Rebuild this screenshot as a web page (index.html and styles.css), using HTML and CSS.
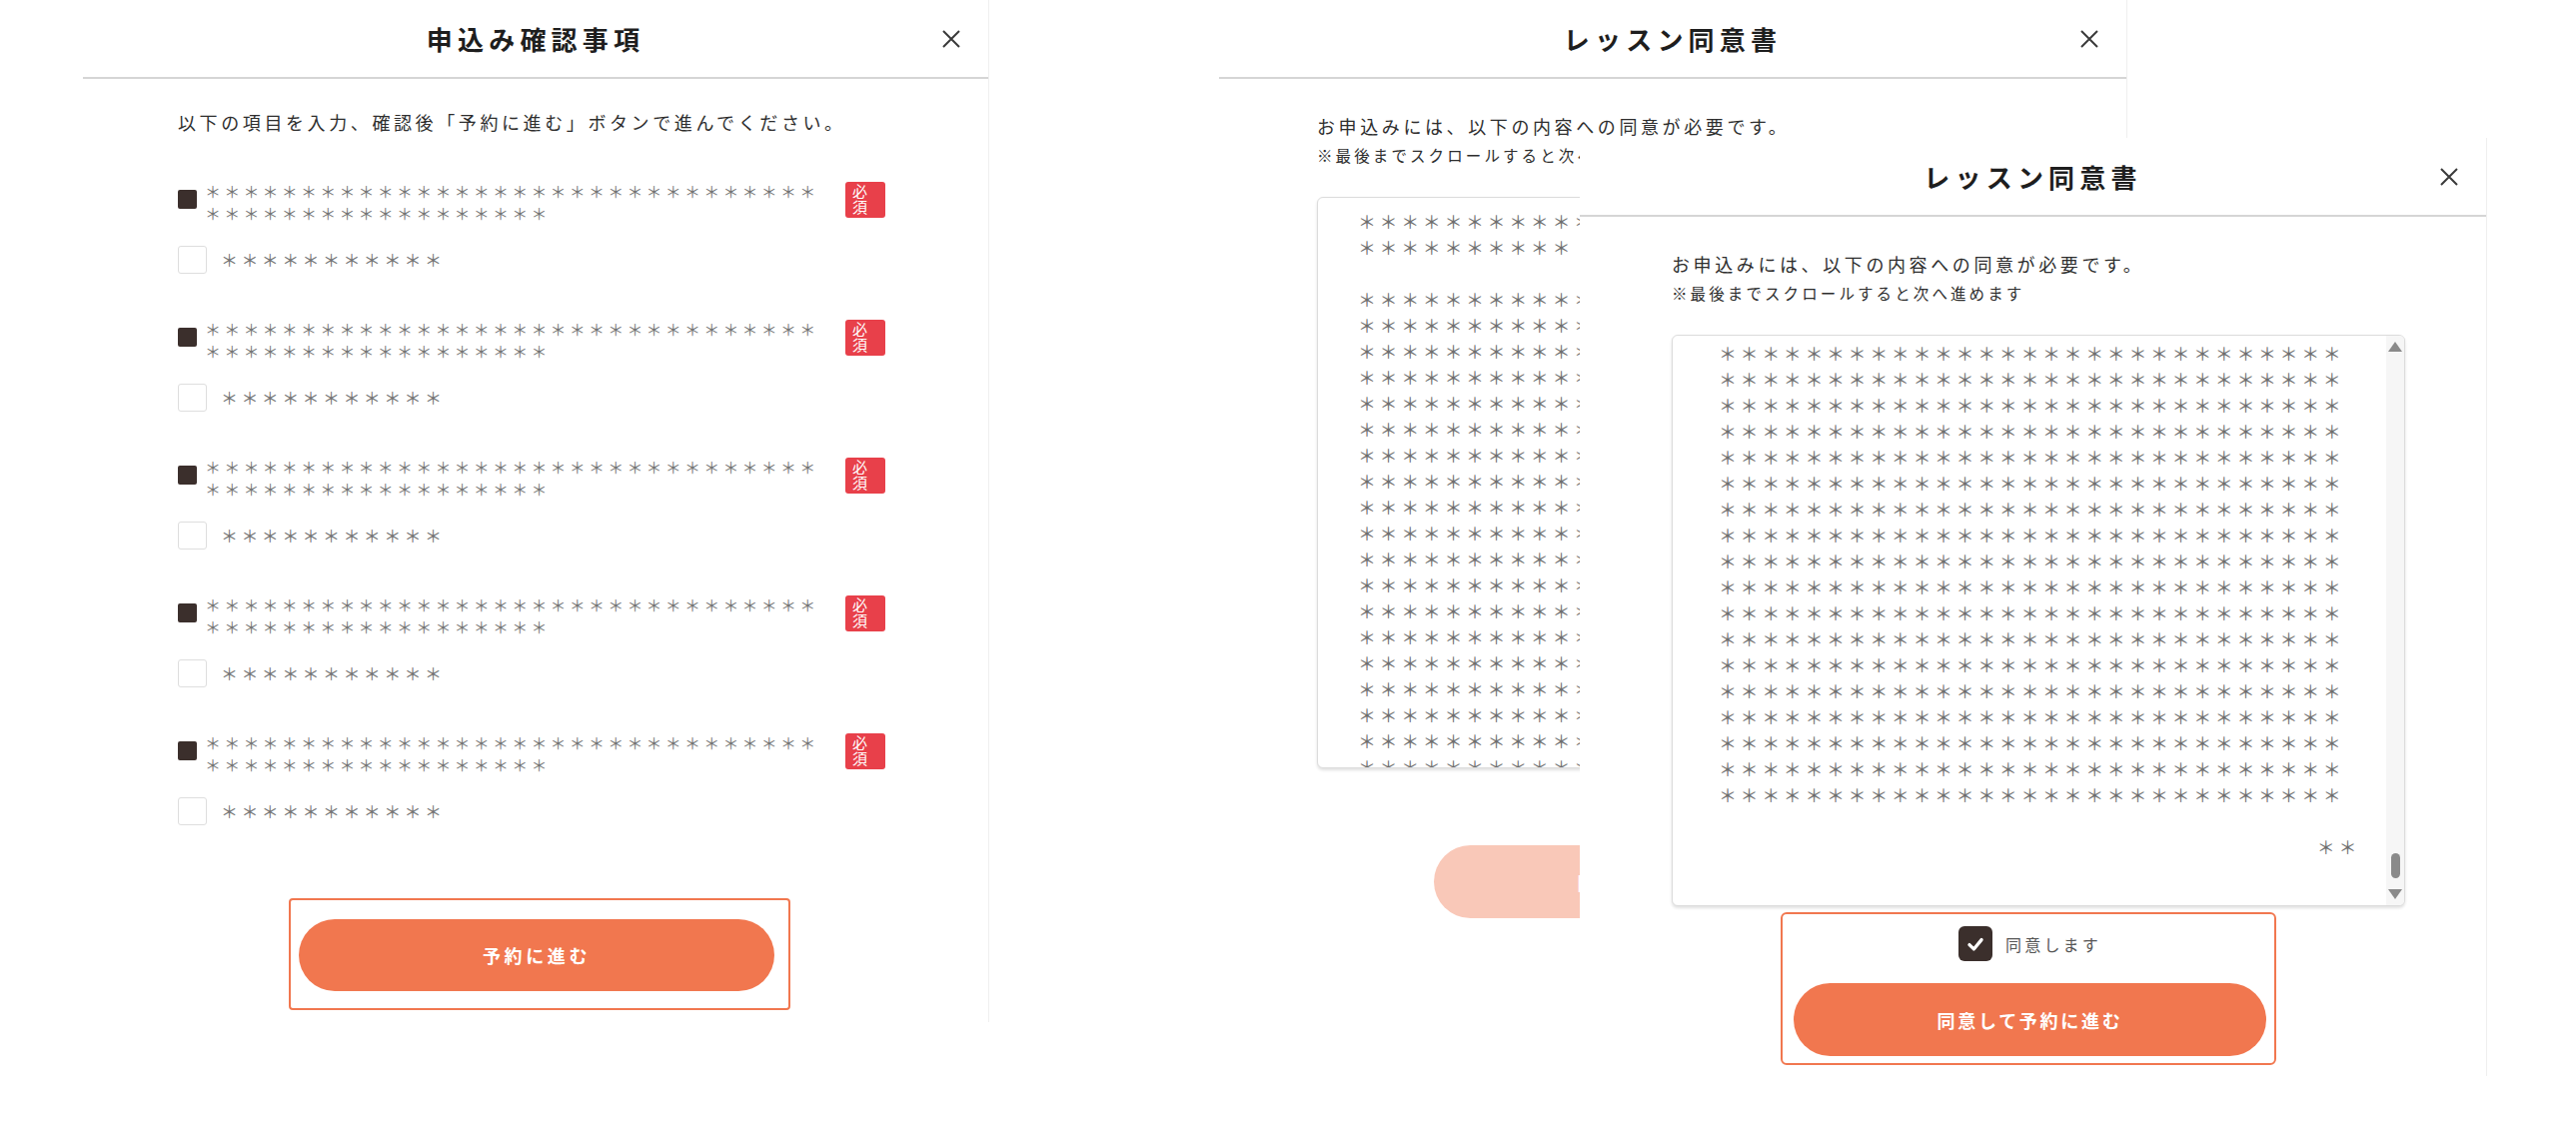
FILE: index.html
```html
<!DOCTYPE html>
<html lang="ja">
<head>
<meta charset="utf-8">
<title>申込み確認事項 / レッスン同意書</title>
<link rel="stylesheet" href="styles.css">
</head>
<body>
<div class="canvas">

  <section class="panel panel--confirm">
    <header class="panel-head">
      <h2 class="panel-title">申込み確認事項</h2>
      <button class="close-btn" aria-label="閉じる"><svg viewBox="0 0 20 20" width="20" height="20"><path d="M2 2L18 18M18 2L2 18" stroke="#3a3a3a" stroke-width="2" fill="none"/></svg></button>
    </header>
    <div class="panel-body panel-body--confirm">
      <p class="lead">以下の項目を入力、確認後「予約に進む」ボタンで進んでください。</p>
      <ul class="items">
        <li class="item">
          <div class="item-main"><span class="bullet"></span><span class="item-text">＊＊＊＊＊＊＊＊＊＊＊＊＊＊＊＊＊＊＊＊＊＊＊＊＊＊＊＊＊＊＊＊＊＊＊＊＊＊＊＊＊＊＊＊＊＊＊＊＊＊</span><span class="badge">必<br>須</span></div>
          <label class="item-check"><span class="box"></span><span class="item-label">＊＊＊＊＊＊＊＊＊＊＊</span></label>
        </li>
        <li class="item">
          <div class="item-main"><span class="bullet"></span><span class="item-text">＊＊＊＊＊＊＊＊＊＊＊＊＊＊＊＊＊＊＊＊＊＊＊＊＊＊＊＊＊＊＊＊＊＊＊＊＊＊＊＊＊＊＊＊＊＊＊＊＊＊</span><span class="badge">必<br>須</span></div>
          <label class="item-check"><span class="box"></span><span class="item-label">＊＊＊＊＊＊＊＊＊＊＊</span></label>
        </li>
        <li class="item">
          <div class="item-main"><span class="bullet"></span><span class="item-text">＊＊＊＊＊＊＊＊＊＊＊＊＊＊＊＊＊＊＊＊＊＊＊＊＊＊＊＊＊＊＊＊＊＊＊＊＊＊＊＊＊＊＊＊＊＊＊＊＊＊</span><span class="badge">必<br>須</span></div>
          <label class="item-check"><span class="box"></span><span class="item-label">＊＊＊＊＊＊＊＊＊＊＊</span></label>
        </li>
        <li class="item">
          <div class="item-main"><span class="bullet"></span><span class="item-text">＊＊＊＊＊＊＊＊＊＊＊＊＊＊＊＊＊＊＊＊＊＊＊＊＊＊＊＊＊＊＊＊＊＊＊＊＊＊＊＊＊＊＊＊＊＊＊＊＊＊</span><span class="badge">必<br>須</span></div>
          <label class="item-check"><span class="box"></span><span class="item-label">＊＊＊＊＊＊＊＊＊＊＊</span></label>
        </li>
        <li class="item">
          <div class="item-main"><span class="bullet"></span><span class="item-text">＊＊＊＊＊＊＊＊＊＊＊＊＊＊＊＊＊＊＊＊＊＊＊＊＊＊＊＊＊＊＊＊＊＊＊＊＊＊＊＊＊＊＊＊＊＊＊＊＊＊</span><span class="badge">必<br>須</span></div>
          <label class="item-check"><span class="box"></span><span class="item-label">＊＊＊＊＊＊＊＊＊＊＊</span></label>
        </li>
      </ul>
      <div class="cta cta--confirm">
        <button class="pill">予約に進む</button>
      </div>
    </div>
  </section>

  <section class="panel panel--back">
    <header class="panel-head">
      <h2 class="panel-title">レッスン同意書</h2>
      <button class="close-btn" aria-label="閉じる"><svg viewBox="0 0 20 20" width="20" height="20"><path d="M2 2L18 18M18 2L2 18" stroke="#3a3a3a" stroke-width="2" fill="none"/></svg></button>
    </header>
    <div class="panel-body panel-body--consent">
      <p class="lead">お申込みには、以下の内容への同意が必要です。</p>
      <p class="note">※最後までスクロールすると次へ進めます</p>
      <div class="terms">
        <div class="terms-content">
          <p class="terms-text">＊＊＊＊＊＊＊＊＊＊＊＊＊＊＊＊＊＊＊＊＊＊＊＊＊＊＊＊＊＊＊＊＊＊＊＊＊＊＊</p>
          <p class="terms-text terms-text--gap">＊＊＊＊＊＊＊＊＊＊＊＊＊＊＊＊＊＊＊＊＊＊＊＊＊＊＊＊＊＊＊＊＊＊＊＊＊＊＊＊＊＊＊＊＊＊＊＊＊＊＊＊＊＊＊＊＊＊＊＊＊＊＊＊＊＊＊＊＊＊＊＊＊＊＊＊＊＊＊＊＊＊＊＊＊＊＊＊＊＊＊＊＊＊＊＊＊＊＊＊＊＊＊＊＊＊＊＊＊＊＊＊＊＊＊＊＊＊＊＊＊＊＊＊＊＊＊＊＊＊＊＊＊＊＊＊＊＊＊＊＊＊＊＊＊＊＊＊＊＊＊＊＊＊＊＊＊＊＊＊＊＊＊＊＊＊＊＊＊＊＊＊＊＊＊＊＊＊＊＊＊＊＊＊＊＊＊＊＊＊＊＊＊＊＊＊＊＊＊＊＊＊＊＊＊＊＊＊＊＊＊＊＊＊＊＊＊＊＊＊＊＊＊＊＊＊＊＊＊＊＊＊＊＊＊＊＊＊＊＊＊＊＊＊＊＊＊＊＊＊＊＊＊＊＊＊＊＊＊＊＊＊＊＊＊＊＊＊＊＊＊＊＊＊＊＊＊＊＊＊＊＊＊＊＊＊＊＊＊＊＊＊＊＊＊＊＊＊＊＊＊＊＊＊＊＊＊＊＊＊＊＊＊＊＊＊＊＊＊＊＊＊＊＊＊＊＊＊＊＊＊＊＊＊＊＊＊＊＊＊＊＊＊＊＊＊＊＊＊＊＊＊＊＊＊＊＊＊＊＊＊＊＊＊＊＊＊＊＊＊＊＊＊＊＊＊＊＊＊＊＊＊＊＊＊＊＊＊＊＊＊＊＊＊＊＊＊＊＊＊＊＊＊＊＊＊＊＊＊＊＊＊＊＊＊＊＊＊＊＊＊＊＊＊＊＊＊＊＊＊＊＊＊＊＊＊＊＊＊＊＊＊＊＊＊＊＊＊＊＊＊＊＊＊＊＊＊＊＊＊＊＊＊＊＊＊＊＊＊＊＊＊＊＊＊＊＊＊＊＊＊＊＊＊＊＊＊＊＊＊＊＊＊＊＊＊＊＊＊＊＊＊＊＊＊＊＊＊＊＊＊＊＊＊＊＊＊＊＊＊＊＊＊＊＊＊＊＊＊＊＊＊＊＊＊＊＊＊＊＊＊＊＊＊＊＊＊＊＊＊＊＊＊＊＊＊＊＊＊＊＊＊＊＊＊＊＊＊＊＊＊＊＊＊＊＊＊＊＊＊＊＊＊＊＊＊＊＊＊＊＊＊＊＊＊＊＊＊＊＊＊＊＊＊＊＊＊＊＊＊＊＊＊＊＊＊＊＊＊＊＊＊＊＊＊＊＊＊＊＊＊＊＊＊＊＊＊＊＊＊＊＊＊＊＊＊＊＊＊＊＊＊＊＊＊＊＊＊＊＊＊＊＊＊＊＊＊＊＊＊＊＊＊＊＊＊＊＊＊＊＊</p>
        </div>
        <div class="scrollbar"><span class="sb-up"></span><span class="sb-track"><span class="sb-thumb sb-thumb--top"></span></span><span class="sb-down"></span></div>
      </div>
      <div class="agree agree--plain">
        <label class="agree-check"><span class="agree-box agree-box--off"></span><span class="agree-label">同意します</span></label>
        <button class="pill pill--agree pill--disabled">同意して予約に進む</button>
      </div>
    </div>
  </section>

  <section class="panel panel--front">
    <header class="panel-head">
      <h2 class="panel-title">レッスン同意書</h2>
      <button class="close-btn" aria-label="閉じる"><svg viewBox="0 0 20 20" width="20" height="20"><path d="M2 2L18 18M18 2L2 18" stroke="#3a3a3a" stroke-width="2" fill="none"/></svg></button>
    </header>
    <div class="panel-body panel-body--consent panel-body--front">
      <p class="lead">お申込みには、以下の内容への同意が必要です。</p>
      <p class="note">※最後までスクロールすると次へ進めます</p>
      <div class="terms">
        <div class="terms-content terms-content--end">
          <p class="terms-text terms-text--tail">＊＊＊＊＊＊＊＊＊＊＊＊＊＊＊＊＊＊＊＊＊＊＊＊＊＊＊＊＊＊＊＊＊＊＊＊＊＊＊＊＊＊＊＊＊＊＊＊＊＊＊＊＊＊＊＊＊＊＊＊＊＊＊＊＊＊＊＊＊＊＊＊＊＊＊＊＊＊＊＊＊＊＊＊＊＊＊＊＊＊＊＊＊＊＊＊＊＊＊＊＊＊＊＊＊＊＊＊＊＊＊＊＊＊＊＊＊＊＊＊＊＊＊＊＊＊＊＊＊＊＊＊＊＊＊＊＊＊＊＊＊＊＊＊＊＊＊＊＊＊＊＊＊＊＊＊＊＊＊＊＊＊＊＊＊＊＊＊＊＊＊＊＊＊＊＊＊＊＊＊＊＊＊＊＊＊＊＊＊＊＊＊＊＊＊＊＊＊＊＊＊＊＊＊＊＊＊＊＊＊＊＊＊＊＊＊＊＊＊＊＊＊＊＊＊＊＊＊＊＊＊＊＊＊＊＊＊＊＊＊＊＊＊＊＊＊＊＊＊＊＊＊＊＊＊＊＊＊＊＊＊＊＊＊＊＊＊＊＊＊＊＊＊＊＊＊＊＊＊＊＊＊＊＊＊＊＊＊＊＊＊＊＊＊＊＊＊＊＊＊＊＊＊＊＊＊＊＊＊＊＊＊＊＊＊＊＊＊＊＊＊＊＊＊＊＊＊＊＊＊＊＊＊＊＊＊＊＊＊＊＊＊＊＊＊＊＊＊＊＊＊＊＊＊＊＊＊＊＊＊＊＊＊＊＊＊＊＊＊＊＊＊＊＊＊＊＊＊＊＊＊＊＊＊＊＊＊＊＊＊＊＊＊＊＊＊＊＊＊＊＊＊＊＊＊＊＊＊＊＊＊＊＊＊＊＊＊＊＊＊＊＊＊＊＊＊＊＊＊＊＊＊＊＊＊＊＊＊＊＊＊＊＊＊＊＊＊＊＊＊＊＊＊＊＊＊＊＊＊＊＊＊＊＊＊＊＊＊＊＊＊＊＊＊＊＊＊＊＊＊＊＊＊＊＊＊＊＊＊＊＊＊＊＊＊＊＊＊＊＊＊＊＊＊＊＊＊＊＊＊＊＊＊＊＊＊＊＊＊＊＊＊＊＊＊＊＊＊＊＊＊＊＊＊＊＊＊＊＊＊＊＊＊＊＊＊＊＊＊＊＊＊＊＊＊＊＊＊＊＊＊＊＊＊＊＊＊＊＊＊＊＊＊＊＊＊＊＊＊＊＊＊＊＊＊＊＊＊＊＊＊＊＊＊＊＊＊＊＊＊＊＊＊＊＊＊＊＊＊＊＊＊＊＊＊＊＊＊＊＊＊＊＊＊＊＊＊＊＊＊＊＊＊＊＊＊＊＊＊＊＊＊＊＊＊＊＊＊＊＊＊＊＊＊＊＊＊＊＊＊＊＊＊＊＊＊＊＊＊＊＊＊＊＊＊＊＊＊</p>
          <p class="terms-text terms-text--end">＊＊</p>
        </div>
        <div class="scrollbar"><span class="sb-up"></span><span class="sb-track"><span class="sb-thumb"></span></span><span class="sb-down"></span></div>
      </div>
      <div class="agree">
        <label class="agree-check"><span class="agree-box"><svg viewBox="0 0 20 20" width="22" height="22"><path d="M4.5 10.5L8.5 14.5L15.5 6" stroke="#fff" stroke-width="3" fill="none" stroke-linecap="round" stroke-linejoin="round"/></svg></span><span class="agree-label">同意します</span></label>
        <button class="pill pill--agree">同意して予約に進む</button>
      </div>
    </div>
  </section>

</div>
</body>
</html>
```

FILE: styles.css
```css
* {
  box-sizing: border-box;
  margin: 0;
  padding: 0;
}

html,
body {
  width: 2578px;
  height: 1126px;
  overflow: hidden;
  background: #fff;
}

body {
  font-family: "Noto Sans CJK JP", "Noto Sans", sans-serif;
  color: #333;
}

.canvas {
  position: relative;
  width: 2578px;
  height: 1126px;
}

/* windows on the canvas */
.panel {
  position: absolute;
  display: flex;
  flex-direction: column;
  background: #fff;
  border-right: 1px solid #efefef;
}

.panel--confirm {
  left: 83px;
  top: 0;
  width: 907px;
  height: 1023px;
}

.panel--back {
  left: 1220px;
  top: 0;
  width: 909px;
  height: 1000px;
}

.panel--front {
  left: 1581px;
  top: 138px;
  width: 908px;
  height: 939px;
}

/* header */
.panel-head {
  flex: none;
  height: 79px;
  border-bottom: 2px solid #d5d5d5;
  display: grid;
  grid-template-columns: 1fr auto 1fr;
  align-items: center;
}

.panel-title {
  grid-column: 2;
  font-size: 26px;
  font-weight: 700;
  letter-spacing: 0.2em;
  line-height: 1;
  color: #1e1e1e;
}

.close-btn {
  grid-column: 3;
  justify-self: end;
  margin-right: 27px;
  width: 20px;
  height: 20px;
  border: 0;
  background: none;
  display: flex;
}

/* body text */
.lead {
  font-size: 18px;
  letter-spacing: 0.2em;
  line-height: 27px;
  color: #2e2e2e;
  white-space: nowrap;
}

.note {
  margin-top: 4px;
  font-size: 15.5px;
  letter-spacing: 0.2em;
  line-height: 22px;
  color: #2e2e2e;
  white-space: nowrap;
}

/* confirm panel */
.panel-body--confirm {
  padding: 30px 0 0 95px;
}

.items {
  list-style: none;
  margin-top: 44px;
  display: flex;
  flex-direction: column;
  gap: 44px;
}

.item-main {
  display: flex;
  align-items: flex-start;
  width: 708px;
}

.bullet {
  flex: none;
  width: 19px;
  height: 19px;
  margin-top: 10px;
  border-radius: 2px;
  background: #3b2f2c;
}

.item-text {
  width: 625px;
  margin-left: 8px;
  font-size: 16px;
  letter-spacing: 0.2em;
  line-height: 22px;
  color: #757575;
  word-break: break-all;
  line-break: anywhere;
}

.badge {
  flex: none;
  margin-left: auto;
  margin-top: 2px;
  width: 40px;
  height: 36px;
  padding: 1px 0 0 7px;
  border-radius: 3px;
  background: #e8404a;
  color: #fff;
  font-size: 15px;
  line-height: 16px;
  letter-spacing: 0;
}

.item-check {
  display: flex;
  align-items: center;
  height: 28px;
  margin-top: 22px;
}

.box {
  flex: none;
  width: 29px;
  height: 28px;
  border: 1.5px solid #dedede;
  border-radius: 3px;
  background: #fff;
}

.item-label {
  margin-left: 14px;
  font-size: 17px;
  letter-spacing: 0.2em;
  line-height: 28px;
  color: #757575;
}

.cta--confirm {
  margin-top: 73px;
  margin-left: 111px;
  width: 502px;
  border: 2px solid #f1774f;
  border-radius: 4px;
  padding: 19px 14px 17px 8px;
}

.pill {
  display: flex;
  align-items: center;
  justify-content: center;
  width: 476px;
  height: 72px;
  border: 0;
  border-radius: 37px;
  background: #f1774f;
  color: #fff;
  font-family: inherit;
  font-size: 18px;
  font-weight: 700;
  letter-spacing: 0.2em;
}

/* consent panels */
.panel-body--consent {
  padding: 34px 0 0 98px;
}

.panel-body--front {
  padding-left: 92px;
}

.terms {
  margin-top: 31px;
  width: 734px;
  height: 572px;
  display: flex;
  border: 1px solid #dcdcdc;
  border-radius: 6px;
  box-shadow: 0 2px 3px rgba(0, 0, 0, 0.12);
  overflow: hidden;
  background: #fff;
}

.terms-content {
  flex: 1;
  padding: 10px 0 0 40px;
  overflow: hidden;
}

.terms-content--end {
  padding: 4px 0 0 46px;
}

.terms-text {
  width: 642px;
  font-size: 18px;
  letter-spacing: 0.2em;
  line-height: 26px;
  color: #6e6e6e;
  word-break: break-all;
  line-break: anywhere;
}

.terms-text--gap {
  margin-top: 26px;
}

.terms-text--tail {
  height: 468px;
  overflow: hidden;
}

.terms-text--end {
  margin-top: 26px;
  text-align: right;
}

.scrollbar {
  flex: none;
  width: 18px;
  display: flex;
  flex-direction: column;
  align-items: center;
  padding: 6px 0;
  background: #f6f6f6;
}

.sb-up,
.sb-down {
  flex: none;
  width: 0;
  height: 0;
  border-left: 7px solid transparent;
  border-right: 7px solid transparent;
}

.sb-up {
  border-bottom: 10px solid #8a8a8a;
}

.sb-down {
  border-top: 10px solid #8a8a8a;
}

.sb-track {
  flex: 1;
  width: 100%;
  display: flex;
  flex-direction: column;
  justify-content: flex-end;
  align-items: center;
  padding-bottom: 11px;
}

.sb-thumb {
  width: 9px;
  height: 25px;
  border-radius: 5px;
  background: #8a8a8a;
}

.sb-thumb--top {
  margin-bottom: auto;
  margin-top: 4px;
  height: 60px;
}

.agree {
  margin-top: 6px;
  margin-left: 109px;
  width: 496px;
  display: flex;
  flex-direction: column;
  align-items: center;
  padding: 12px 8px 7px 11px;
  border: 2px solid #f1774f;
  border-radius: 6px;
}

.agree--plain {
  margin-left: 104px;
  border-color: transparent;
}

.agree-check {
  display: flex;
  align-items: center;
  gap: 13px;
  height: 35px;
}

.agree-box {
  flex: none;
  width: 34px;
  height: 35px;
  display: flex;
  align-items: center;
  justify-content: center;
  border-radius: 6px;
  background: #3b2f2c;
}

.agree-box--off {
  background: #fff;
  border: 1.5px solid #dedede;
}

.agree-label {
  font-size: 16px;
  letter-spacing: 0.2em;
  color: #555;
}

.pill--agree {
  margin-top: 22px;
  width: 473px;
  height: 73px;
  font-size: 18px;
  letter-spacing: 0.15em;
}

.pill--disabled {
  background: #f9c8b8;
}
```
